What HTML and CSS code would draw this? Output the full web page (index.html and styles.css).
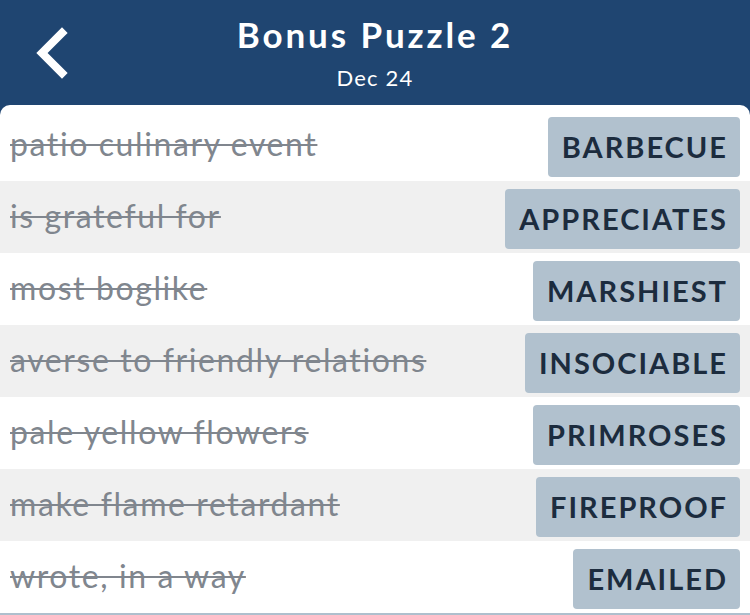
FILE: index.html
```html
<!DOCTYPE html>
<html>
<head>
    <title>Bonus Puzzle 2</title>
    <meta name="viewport" content="width=device-width, initial-scale=1.0">
    <link rel="stylesheet" href="styles.css">
</head>
<body>
    <div class="topo">
        <button class="voltar" aria-label="Back">
            <svg width="36" height="52" viewBox="0 0 36 52">
                <path d="M30 6 L10 26 L30 46" fill="none" stroke="#fff" stroke-width="8" stroke-linecap="square" stroke-linejoin="miter"/>
            </svg>
        </button>
        <div class="titulo">
            <h1>Bonus Puzzle 2</h1>
            <p>Dec 24</p>
        </div>
    </div>

    <div class="lista">
        <div class="linha">
            <span class="pista">patio culinary event</span>
            <span class="resposta">BARBECUE</span>
        </div>
        <div class="linha">
            <span class="pista">is grateful for</span>
            <span class="resposta">APPRECIATES</span>
        </div>
        <div class="linha">
            <span class="pista">most boglike</span>
            <span class="resposta">MARSHIEST</span>
        </div>
        <div class="linha">
            <span class="pista">averse to friendly relations</span>
            <span class="resposta">INSOCIABLE</span>
        </div>
        <div class="linha">
            <span class="pista">pale yellow flowers</span>
            <span class="resposta">PRIMROSES</span>
        </div>
        <div class="linha">
            <span class="pista">make flame retardant</span>
            <span class="resposta">FIREPROOF</span>
        </div>
        <div class="linha">
            <span class="pista">wrote, in a way</span>
            <span class="resposta">EMAILED</span>
        </div>
    </div>
</body>
</html>
```

FILE: styles.css
```css
body {
    margin: 0;
    background: #1f4571;
    font-family: Lato, "Open Sans", sans-serif;
    height: 615px;
    overflow: hidden;
}
.topo {
    height: 105px;
    position: relative;
    display: flex;
    justify-content: center;
    color: white;
}
.voltar {
    position: absolute; /* fica por cima do titulo */
    left: 32px;
    top: 27px;
    background: none;
    border: none;
    padding: 0;
    cursor: pointer;
}
.titulo {
    text-align: center;
    padding-top: 14px;
}
.titulo h1 {
    margin: 0;
    font-size: 35px;
    line-height: 40px;
    font-weight: 700;
    letter-spacing: 2.9px;
}
.titulo p {
    margin: 10px 0 0;
    font-size: 22px;
    line-height: 28px;
    letter-spacing: 1.2px;
}
.lista {
    background: white;
    border-radius: 10px 10px 0 0;
    padding-top: 4px;
    border-bottom: 2px solid #aebfcd;
}
.linha {
    display: flex;
    align-items: center;
    justify-content: space-between;
    height: 72px;
    padding: 0 10px;
    box-sizing: border-box;
}
.linha:nth-child(even) {
    background: #f0f0f0;
}
.pista {
    color: #80868e;
    font-size: 32px;
    letter-spacing: 1.6px;
    text-decoration: line-through;
    text-decoration-thickness: 2px;
    margin-top: -3px;
}
.resposta {
    background: #b1c1ce;
    color: #1c2c3e;
    font-size: 29px;
    font-weight: 700;
    letter-spacing: 2px;
    line-height: 60px;
    padding: 0 12px 0 14px;
    border-radius: 4px;
    margin-top: 3px;
}
```
